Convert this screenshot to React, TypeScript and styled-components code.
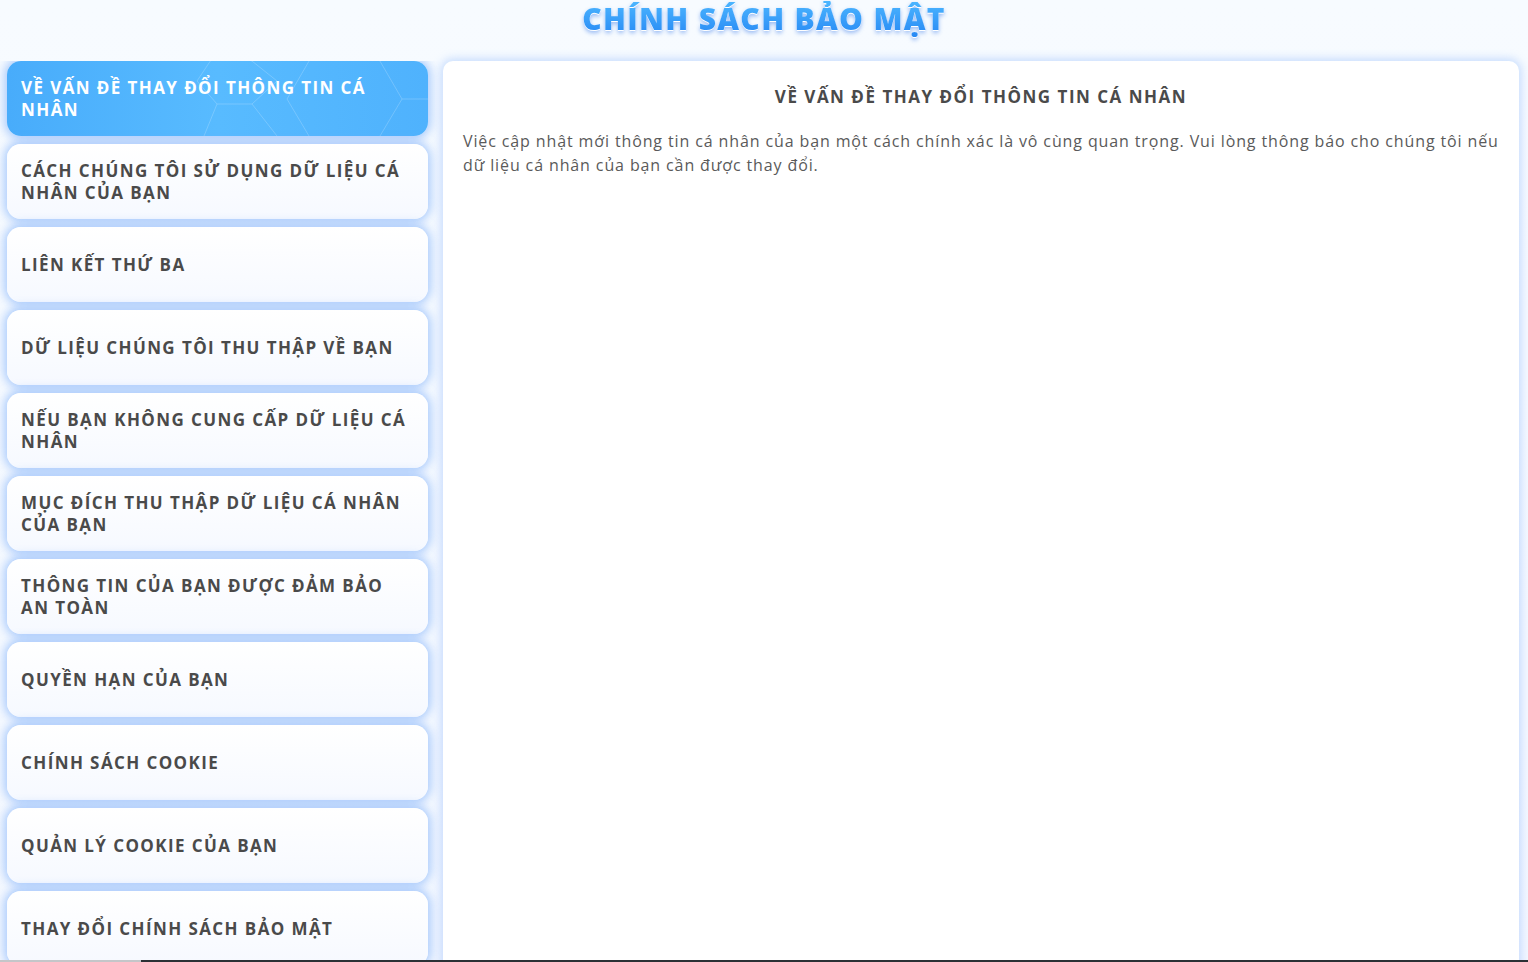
import React from 'react';
import styled, { createGlobalStyle } from 'styled-components';

const topics = [
  'VỀ VẤN ĐỀ THAY ĐỔI THÔNG TIN CÁ NHÂN',
  'CÁCH CHÚNG TÔI SỬ DỤNG DỮ LIỆU CÁ NHÂN CỦA BẠN',
  'LIÊN KẾT THỨ BA',
  'DỮ LIỆU CHÚNG TÔI THU THẬP VỀ BẠN',
  'NẾU BẠN KHÔNG CUNG CẤP DỮ LIỆU CÁ NHÂN',
  'MỤC ĐÍCH THU THẬP DỮ LIỆU CÁ NHÂN CỦA BẠN',
  'THÔNG TIN CỦA BẠN ĐƯỢC ĐẢM BẢO AN TOÀN',
  'QUYỀN HẠN CỦA BẠN',
  'CHÍNH SÁCH COOKIE',
  'QUẢN LÝ COOKIE CỦA BẠN',
  'THAY ĐỔI CHÍNH SÁCH BẢO MẬT',
];

const App = () => {
  const active = 0;

  return (
    <>
      <GlobalStyle />
      <Page>
        <TitleRow>
          <Title>CHÍNH SÁCH BẢO MẬT</Title>
        </TitleRow>
        <Layout>
          <Sidebar>
            {topics.map((t, i) => (
              <TopicCard key={t} $active={i === active}>
                {i === active && <HexPattern />}
                <TopicText>{t}</TopicText>
              </TopicCard>
            ))}
          </Sidebar>
          <ContentPanel>
            <ContentHeading>{topics[active]}</ContentHeading>
            <ContentText>
              Việc cập nhật mới thông tin cá nhân của bạn một cách chính xác là vô cùng quan trọng. Vui lòng thông báo cho chúng tôi nếu dữ liệu cá nhân của bạn cần được thay đổi.
            </ContentText>
          </ContentPanel>
        </Layout>
      </Page>
      <BottomBar>
        <BarTrack />
        <BarFill />
      </BottomBar>
    </>
  );
};

const HexPattern = () => (
  <HexSvg viewBox="0 0 421 75" preserveAspectRatio="none">
    <g fill="none" stroke="rgba(255,255,255,0.2)" strokeWidth="1">
      <path d="M210 -10 L245 0 L270 20 L245 43 L210 43 L190 20 Z" />
      <path d="M245 43 L270 75 M210 43 L195 80" />
      <path d="M305 -5 L370 -5 L395 38 L370 80 L305 80 L280 38 Z" />
      <path d="M395 38 L421 38" />
    </g>
  </HexSvg>
);

export default App;

const GlobalStyle = createGlobalStyle`
  html, body {
    margin: 0;
    padding: 0;
    background: #f6faff;
    font-family: "Open Sans", "Noto Sans", sans-serif;
    overflow: hidden;
  }
  * { box-sizing: border-box; }
`

const Page = styled.div`
  width: 100%;
  min-height: 100vh;
  background: linear-gradient(180deg, #f7fbff 0%, #f4f8ff 100%);
`

const TitleRow = styled.div`
  height: 61px;
  display: flex;
  justify-content: center;
  padding-top: 1px;
`

const Title = styled.h1`
  margin: 0;
  font-size: 30px;
  line-height: 36px;
  font-weight: 800;
  letter-spacing: 1.3px;
  background: linear-gradient(180deg, #4cb6ff 0%, #2a8cf5 55%, #1c6fe2 100%);
  -webkit-background-clip: text;
  background-clip: text;
  color: transparent;
  filter: drop-shadow(0 1px 0 #ffffff) drop-shadow(0 2px 2px rgba(40, 110, 230, 0.45));
`

const Layout = styled.div`
  display: grid;
  grid-template-columns: 443px 1fr;
  padding-right: 9px;
`

const Sidebar = styled.div`
  display: flex;
  flex-direction: column;
  gap: 8px;
  padding: 0 15px 20px 7px;
  overflow: hidden;
`

const TopicCard = styled.div<{ $active: boolean }>`
  position: relative;
  height: 75px;
  flex-shrink: 0;
  display: flex;
  align-items: center;
  padding: 0 14px;
  border-radius: 14px;
  overflow: hidden;
  background: ${p => p.$active
    ? 'linear-gradient(90deg, #48acfb 0%, #58bbff 50%, #4fb2fd 100%)'
    : 'linear-gradient(180deg, #ffffff 0%, #f6f9ff 100%)'};
  box-shadow: 0 0 10px 3px rgba(110, 165, 250, 0.55);
  color: ${p => (p.$active ? '#ffffff' : '#4a4a4a')};
`

const HexSvg = styled.svg`
  position: absolute;
  inset: 0;
  width: 100%;
  height: 100%;
`

const TopicText = styled.span`
  position: relative;
  font-size: 17px;
  line-height: 22px;
  font-weight: 700;
  letter-spacing: 1.4px;
`

const ContentPanel = styled.div`
  background: #ffffff;
  border-radius: 10px;
  box-shadow: 0 0 10px 2px rgba(120, 170, 250, 0.4);
  padding: 24px 20px 20px;
  min-height: 960px;
`

const ContentHeading = styled.h2`
  margin: 0 0 20px;
  text-align: center;
  font-size: 17px;
  line-height: 24px;
  font-weight: 700;
  letter-spacing: 1.5px;
  color: #4a4a4a;
`

const ContentText = styled.p`
  margin: 0;
  font-size: 16px;
  line-height: 24px;
  letter-spacing: 0.88px;
  color: #5a5a5a;
`

const BottomBar = styled.div`
  position: fixed;
  left: 0;
  right: 0;
  bottom: 0;
  height: 2px;
  display: flex;
`

const BarTrack = styled.div`
  width: 141px;
  background: #c4c6c9;
`

const BarFill = styled.div`
  flex: 1;
  background: #2b3035;
`
